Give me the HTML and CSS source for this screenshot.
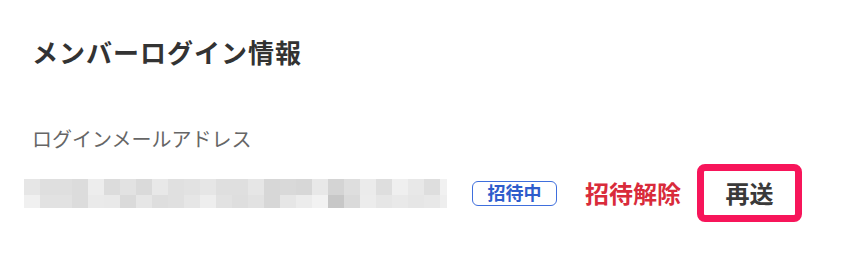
FILE: index.html
```html
<!DOCTYPE html>
<html lang="ja">
<head>
<meta charset="utf-8">
<title>メンバーログイン情報</title>
<link rel="stylesheet" href="styles.css">
</head>
<body>
<section class="panel">
  <h2 class="title">メンバーログイン情報</h2>
  <div class="field-label">ログインメールアドレス</div>
  <div class="row">
    <div class="mosaic" aria-label="メールアドレス（非表示）">
      <span style="background:#e6e6e6"></span><span style="background:#dfdfdf"></span><span style="background:#dfdfdf"></span><span style="background:#dcdcdc"></span><span style="background:#ededed"></span><span style="background:#dcdcdc"></span><span style="background:#e2e2e2"></span><span style="background:#dadada"></span><span style="background:#e8e8e8"></span><span style="background:#e0e0e0"></span><span style="background:#e2e2e2"></span><span style="background:#e6e6e6"></span><span style="background:#dfdfdf"></span><span style="background:#dfdfdf"></span><span style="background:#e6e6e6"></span><span style="background:#d7d7d7"></span><span style="background:#d9d9d9"></span><span style="background:#d7d7d7"></span><span style="background:#e8e8e8"></span><span style="background:#d4d4d4"></span><span style="background:#dedede"></span><span style="background:#ebebeb"></span><span style="background:#dedede"></span><span style="background:#efefef"></span><span style="background:#e8e8e8"></span><span style="background:#dedede"></span><span style="background:#f1f1f1"></span>
      <span style="background:#f0f0f0"></span><span style="background:#e2e2e2"></span><span style="background:#e2e2e2"></span><span style="background:#dcdcdc"></span><span style="background:#eaeaea"></span><span style="background:#e9e9e9"></span><span style="background:#dadada"></span><span style="background:#e6e6e6"></span><span style="background:#dedede"></span><span style="background:#e0e0e0"></span><span style="background:#e6e6e6"></span><span style="background:#eeeeee"></span><span style="background:#e2e2e2"></span><span style="background:#dedede"></span><span style="background:#e2e2e2"></span><span style="background:#d7d7d7"></span><span style="background:#e6e6e6"></span><span style="background:#ececec"></span><span style="background:#f2f2f2"></span><span style="background:#c7c7c7"></span><span style="background:#dadada"></span><span style="background:#ececec"></span><span style="background:#e6e6e6"></span><span style="background:#e9e9e9"></span><span style="background:#e6e6e6"></span><span style="background:#e8e8e8"></span><span style="background:#eeeeee"></span>
    </div>
    <span class="badge">招待中</span>
    <a class="cancel-link" href="#">招待解除</a>
    <button class="resend" type="button">再送</button>
  </div>
</section>
</body>
</html>
```

FILE: styles.css
```css
html, body {
  margin: 0;
  padding: 0;
  background: #ffffff;
}

body {
  font-family: "Noto Sans CJK JP", "Noto Sans", sans-serif;
  color: #333333;
}

.panel {
  padding: 34px 0 0 24px;
}

.title {
  margin: 0;
  padding-left: 8px;
  font-size: 26px;
  line-height: 36px;
  font-weight: 700;
  letter-spacing: 1px;
  color: #333333;
}

.field-label {
  margin-top: 55px;
  padding-left: 8px;
  font-size: 20px;
  line-height: 28px;
  color: #666666;
}

.row {
  display: flex;
  align-items: center;
  margin-top: 11px;
}

.mosaic {
  display: grid;
  grid-template-columns: repeat(26, 16px) 7px;
  grid-template-rows: 16px 13px;
  width: 423px;
}

.mosaic span {
  display: block;
}

.badge {
  margin-left: 25px;
  box-sizing: border-box;
  width: 85px;
  height: 25px;
  padding: 0;
  border: 1.5px solid #3f6fdd;
  border-radius: 6px;
  text-align: center;
  font-size: 18px;
  line-height: 21px;
  font-weight: 700;
  color: #2f5dcc;
}

.cancel-link {
  margin-left: 28px;
  font-size: 24px;
  line-height: 30px;
  font-weight: 700;
  color: #d92b3b;
  text-decoration: none;
}

.resend {
  margin-left: 16px;
  box-sizing: border-box;
  width: 105px;
  height: 58px;
  padding: 0;
  border: 7px solid #f7155a;
  border-radius: 8px;
  background: #ffffff;
  font-family: inherit;
  font-size: 24px;
  line-height: 30px;
  font-weight: 700;
  color: #3a3a3a;
}
```
